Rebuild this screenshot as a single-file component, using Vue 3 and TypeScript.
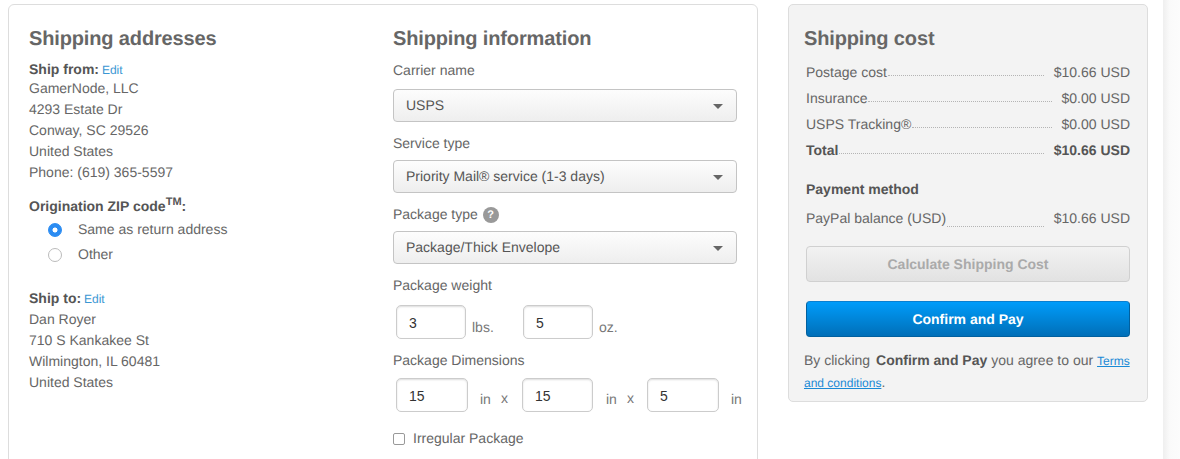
<script setup lang="ts">
interface CostRow { label: string; value: string; total?: boolean }
const rows: CostRow[] = [
  { label: 'Postage cost', value: '$10.66 USD' },
  { label: 'Insurance', value: '$0.00 USD' },
  { label: 'USPS Tracking®', value: '$0.00 USD' },
  { label: 'Total', value: '$10.66 USD', total: true },
]
const fromLines = ['GamerNode, LLC', '4293 Estate Dr', 'Conway, SC 29526', 'United States', 'Phone: (619) 365-5597']
const toLines = ['Dan Royer', '710 S Kankakee St', 'Wilmington, IL 60481', 'United States']
</script>

<template>
  <div class="page">
    <section class="main-card">
      <div class="col-address">
        <h2>Shipping addresses</h2>
        <div class="addr-head"><b>Ship from:</b> <a class="edit">Edit</a></div>
        <div v-for="l in fromLines" :key="l" class="line">{{ l }}</div>
        <div class="zip-title">Origination ZIP code<sup>TM</sup>:</div>
        <label class="radio"><input type="radio" name="zip" checked /><span>Same as return address</span></label>
        <label class="radio"><input type="radio" name="zip" /><span>Other</span></label>
        <div class="addr-head to"><b>Ship to:</b> <a class="edit">Edit</a></div>
        <div v-for="l in toLines" :key="l + 'to'" class="line">{{ l }}</div>
      </div>
      <div class="col-info">
        <h2>Shipping information</h2>
        <div class="label l-carrier">Carrier name</div>
        <div class="select s-carrier"><span>USPS</span><i class="caret"></i></div>
        <div class="label l-service">Service type</div>
        <div class="select s-service"><span>Priority Mail® service (1-3 days)</span><i class="caret"></i></div>
        <div class="label l-type">Package type <span class="help">?</span></div>
        <div class="select s-type"><span>Package/Thick Envelope</span><i class="caret"></i></div>
        <div class="label l-weight">Package weight</div>
        <div class="inputs weight">
          <input class="w1" value="3" /><span class="unit u-lbs">lbs.</span>
          <input class="w2" value="5" /><span class="unit u-oz">oz.</span>
        </div>
        <div class="label l-dim">Package Dimensions</div>
        <div class="inputs dims">
          <input class="d1" value="15" /><span class="unit u-in1">in</span><span class="x x1">x</span>
          <input class="d2" value="15" /><span class="unit u-in2">in</span><span class="x x2">x</span>
          <input class="d3" value="5" /><span class="unit u-in3">in</span>
        </div>
        <label class="check"><input type="checkbox" /><span>Irregular Package</span></label>
      </div>
    </section>

    <aside class="cost-card">
      <h2>Shipping cost</h2>
      <div class="rows">
        <div v-for="r in rows" :key="r.label" class="row" :class="{ total: r.total }">
          <span>{{ r.label }}</span><i class="dots"></i><span class="val">{{ r.value }}</span>
        </div>
      </div>
      <div class="pay-title">Payment method</div>
      <div class="row pay"><span>PayPal balance (USD)</span><i class="dots"></i><span class="val">$10.66 USD</span></div>
      <button class="btn calc" disabled>Calculate Shipping Cost</button>
      <button class="btn confirm">Confirm and Pay</button>
      <p class="terms">By clicking <b>Confirm and Pay</b> you agree to our <a>Terms</a> <a>and conditions</a>.</p>
    </aside>

    <div class="side-strip"></div>
  </div>
</template>

<style>
html, body { margin: 0; background: #fff; overflow: hidden; }
</style>

<style scoped>
.page {
  width: 1180px; height: 459px; overflow: hidden; display: flex; align-items: flex-start;
  padding: 4px 0 0 8px; box-sizing: border-box; position: relative;
  font: 14px/21px "Liberation Sans", Arial, sans-serif; color: #666; text-rendering: geometricPrecision;
}
h2 {
  margin: 0; height: 27px; padding-top: 1px; box-sizing: border-box; font-size: 20px; line-height: 27px;
  font-weight: 700; color: #666; letter-spacing: -0.14px;
}
b { color: #555; }

.main-card {
  width: 750px; height: 480px; flex: none; box-sizing: border-box; display: flex;
  border: 1px solid #ddd; border-radius: 6px; padding: 20px 0 0 20px;
}
.col-address { width: 364px; flex: none; }
.addr-head { margin-top: 8px; height: 18px; line-height: 19px; }
.edit { color: #3b97d3; font-size: 12px; margin-left: -1px; }
.line { height: 21px; line-height: 21px; }
.zip-title { margin-top: 13px; font-weight: 700; color: #555; height: 21px; line-height: 21px; }
.zip-title sup { font-size: 11px; line-height: 0; }
.radio { display: flex; align-items: center; height: 25px; padding-left: 19px; }
.radio input {
  appearance: none; width: 14px; height: 14px; margin: 0 16px 0 0; border: 1px solid #bbb;
  border-radius: 50%; background: #fff; box-sizing: border-box; flex: none;
}
.radio input:checked { background: radial-gradient(circle, #fff 0 2.2px, #2b8cf2 2.8px); border-color: #2b8cf2; }
.addr-head.to { margin-top: 21px; height: 21px; line-height: 21px; }

.col-info { width: 360px; flex: none; position: relative; }
.label { height: 21px; line-height: 21px; }
.l-carrier { margin-top: 8px; }
.l-service { margin-top: 11px; }
.l-type { margin-top: 11px; }
.l-weight { margin-top: 11px; }
.l-dim { margin-top: 11px; }
.select {
  width: 344px; height: 33px; box-sizing: border-box; display: flex; align-items: center;
  justify-content: space-between; padding: 0 13px 0 12px; border: 1px solid #c4c4c4; border-radius: 4px;
  background: linear-gradient(#fdfdfd, #eeeeee); color: #555;
}
.s-carrier { margin-top: 8px; }
.s-service { margin-top: 6px; }
.s-type { margin-top: 6px; }
.caret { width: 0; height: 0; border: 5px solid transparent; border-top: 5px solid #666; border-bottom: 0; margin-top: 1px; }
.help {
  display: inline-block; width: 16px; height: 16px; border-radius: 50%; background: #999; color: #fff;
  font-size: 11px; line-height: 16px; text-align: center; font-weight: 700; margin-left: 1px; vertical-align: 1px;
}
.inputs { display: flex; align-items: flex-start; padding-left: 3px; }
.weight { margin-top: 9px; }
.dims { margin-top: 7px; }
.inputs input {
  height: 34px; box-sizing: border-box; border: 1px solid #ccc; border-radius: 5px; background: #fff;
  box-shadow: inset 0 1px 2px rgba(0,0,0,.14); padding: 1px 0 0 12px; margin: 0; outline: none;
  font: 14px "Liberation Sans", Arial, sans-serif; color: #333; flex: none;
}
.w1, .w2 { width: 70px; }
.d1 { width: 72px; }
.d2 { width: 71px; }
.d3 { width: 72px; }
.unit { margin-top: 11px; flex: none; color: #777; }
.weight .unit { margin-top: 12px; }
.x { margin-top: 10px; flex: none; color: #777; }
.u-lbs { margin-left: 6px; width: 51px; }
.u-oz { margin-left: 6px; }
.u-in1 { margin-left: 12px; width: 21px; }
.x1 { width: 21px; }
.u-in2 { margin-left: 13px; width: 21px; }
.x2 { width: 20px; }
.u-in3 { margin-left: 12px; }
.check { display: flex; align-items: center; margin-top: 16px; height: 21px; }
.check input {
  appearance: none; width: 12px; height: 12px; margin: 0 8px 0 0; border: 1px solid #999; border-radius: 2px;
  background: #fff; box-sizing: border-box; flex: none;
}

.cost-card {
  width: 360px; height: 398px; flex: none; margin-left: 30px; box-sizing: border-box;
  border: 1px solid #ddd; border-radius: 5px; background: #f3f3f3; padding: 20px 17px 0 15px;
}
.rows { margin-top: 7px; margin-left: 2px; }
.row { display: flex; align-items: flex-end; height: 26px; line-height: 26px; }
.dots { flex: 1; border-bottom: 1px dotted #b4b4b4; margin: 0 10px 9px 1px; }
.row.total { font-weight: 700; color: #555; }
.pay-title { margin: 16px 0 0 2px; font-weight: 700; color: #555; height: 21px; line-height: 21px; }
.row.pay { margin: 5px 0 0 2px; }
.row.pay .dots { margin-bottom: 4px; }
.btn {
  display: block; width: 324px; height: 36px; margin-left: 2px; box-sizing: border-box; border-radius: 4px;
  font: 700 14px "Liberation Sans", Arial, sans-serif; padding: 0; text-rendering: geometricPrecision;
}
.calc {
  margin-top: 15px; border: 1px solid #d0d0d0; background: linear-gradient(#f2f2f2, #e2e2e2); color: #aaa;
}
.confirm {
  margin-top: 19px; border: 1px solid #00609f; border-top-color: #0a7fd0;
  background: linear-gradient(#009cfa, #006fb8); color: #fff;
}
.terms { margin: 12px 0 0; line-height: 22px; font-size: 14px; color: #666; }
.terms b { color: #555; margin-left: 2px; }
.terms a { color: #1a8ad6; text-decoration: underline; font-size: 12px; line-height: 20px; }

.side-strip {
  position: absolute; left: 1163px; top: 0; bottom: 0; width: 17px;
  background: linear-gradient(90deg, #efefef, #fafafa 40%, #fcfcfc);
}
</style>
